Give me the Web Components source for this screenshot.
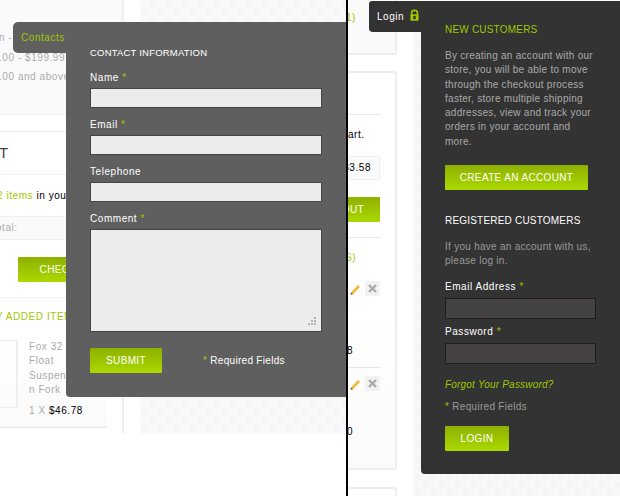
<!DOCTYPE html>
<html>
<head>
<meta charset="utf-8">
<style>
html,body{margin:0;padding:0;background:#fff;}
body{font:10px/14px "Liberation Sans",sans-serif;letter-spacing:.55px;width:620px;height:496px;overflow:hidden;}
</style>
</head>
<body>
<shop-page>
  <left-sheet slot="left"></left-sheet>
  <right-sheet slot="right"></right-sheet>
  <contact-drawer slot="left"></contact-drawer>
  <login-drawer slot="right"></login-drawer>
</shop-page>
<script>
const PATTERN = `background-color:#f6f6f6;background-image:
    linear-gradient(#fafafa 1px,transparent 1px),
    linear-gradient(90deg,#fafafa 1px,transparent 1px),
    conic-gradient(#f5f5f5 25%,#f8f8f8 0 50%,#f5f5f5 0 75%,#f8f8f8 0);
    background-size:8px 8px,8px 8px,16px 16px;`;
const GREEN = 'linear-gradient(#8fb000,#abd900)';

customElements.define('green-button', class extends HTMLElement {
    constructor() {
        super();
        this.attachShadow({ mode: 'open' }).innerHTML = `
        <style>
        :host {
            display:flex;align-items:center;justify-content:center;
            box-sizing:border-box;
            height:25px;
            background:${GREEN};
            border-radius:1px;
            color:#fff;
            letter-spacing:.35px;
            text-transform:uppercase;
        }
        </style>
        <slot></slot>`;
    }
});

customElements.define('form-field', class extends HTMLElement {
    constructor() {
        super();
        this.attachShadow({ mode: 'open' }).innerHTML = `
        <style>
        :host {display:block;}
        label {display:block;height:14px;line-height:var(--label-lh,14px);margin-bottom:4px;color:#fff;}
        i {font-style:normal;color:#9fc800;}
        .box {
            box-sizing:border-box;
            height:var(--h,20px);
            background:var(--fill,#ececec);
            border:1px solid var(--line,#454545);
            position:relative;
        }
        svg {position:absolute;right:5px;bottom:5px;}
        </style>
        <label></label>
        <div class=box></div>`;
    }
    connectedCallback() {
        const label = this.shadowRoot.querySelector('label');
        label.textContent = this.getAttribute('label') + ' ';
        if (this.hasAttribute('req')) label.insertAdjacentHTML('beforeend', '<i>*</i>');
        if (this.hasAttribute('grip'))
            this.shadowRoot.querySelector('.box').innerHTML = `<svg width=9 height=9 fill="#b5b5b5"><rect x=7 y=0 width=2 height=2 /><rect x=4 y=3 width=2 height=2 /><rect x=7 y=3 width=2 height=2 /><rect x=1 y=6 width=2 height=2 /><rect x=4 y=6 width=2 height=2 /><rect x=7 y=6 width=2 height=2 /></svg>`;
    }
});

customElements.define('shop-page', class extends HTMLElement {
    constructor() {
        super();
        this.attachShadow({ mode: 'open' }).innerHTML = `
        <style>
        :host {display:flex;width:620px;height:496px;overflow:hidden;background:#fff;}
        .pane {position:relative;height:496px;overflow:hidden;}
        .l {width:346px;}
        .bar {width:2px;background:#000;}
        .r {width:272px;}
        </style>
        <div class="pane l"><slot name=left></slot></div>
        <div class=bar></div>
        <div class="pane r"><slot name=right></slot></div>`;
    }
});

customElements.define('left-sheet', class extends HTMLElement {
    constructor() {
        super();
        this.attachShadow({ mode: 'open' }).innerHTML = `
        <style>
        :host {display:grid;grid-template-columns:124px 16px 206px;height:434px;color:#aaa;}
        .card {border-right:2px solid #f0f0f0;box-sizing:border-box;overflow:hidden;}
        .tex {${PATTERN}}
        .top {height:115px;box-sizing:border-box;padding-top:31px;background:#fafafa;border-bottom:1px solid #eee;white-space:nowrap;}
        .top div {height:19.5px;line-height:14px;margin-left:-1px;}
        .top b {font-weight:normal;color:#9fc800;}
        .gap {height:16px;border-bottom:1px solid #eee;}
        .head {height:42px;line-height:42px;font-size:15px;color:#444;margin-left:-1px;border-bottom:1px solid #eee;}
        .count {height:41px;line-height:41px;color:#000;white-space:nowrap;margin-left:-3px;}
        .count b {font-weight:normal;color:#9fc800;}
        .tot {height:22px;line-height:22px;background:#fafafa;border:solid #eee;border-width:1px 0;margin-right:15px;white-space:nowrap;text-indent:-4px;}
        .check {width:80px;margin:17px 0 15px 18px;}
        .added {border-top:1px solid #eee;height:42px;line-height:38px;color:#9fc800;white-space:nowrap;text-indent:-4px;}
        .item {display:flex;gap:11px;height:87px;border-bottom:1px solid #e4e4e4;margin-right:15px;background:linear-gradient(#fff,#fafafa);}
        .pic {flex:none;width:16px;height:66px;border:solid #eee;border-width:1px 2px 1px 0;}
        .desc {line-height:14.3px;white-space:nowrap;}
        .price {margin-top:7px;}
        .price em {font-style:normal;color:#000;}
        </style>
        <div class=card>
          <div class=top><div>n - $</div><div>.00 - $199.99 <b>r</b></div><div>.00 and above</div></div>
          <div class=gap></div>
          <div class=head>T</div>
          <div class=count><b>2 items</b> in your</div>
          <div class=tot>otal:</div>
          <green-button class=check>Check</green-button>
          <div class=added>Y ADDED ITEMS</div>
          <div class=item>
            <div class=pic></div>
            <div class=desc>Fox 32<br>Float<br>Suspensio<br>n Fork<div class=price>1 X <em>$46.78</em></div></div>
          </div>
        </div>
        <div></div>
        <div class=tex></div>`;
    }
});

customElements.define('contact-drawer', class extends HTMLElement {
    constructor() {
        super();
        this.attachShadow({ mode: 'open' }).innerHTML = `
        <style>
        :host {
            position:absolute;left:66px;top:22px;
            width:280px;height:375px;
            box-sizing:border-box;
            padding:24px 24px 0;
            background:#5f5f5f;
            border-radius:0 0 0 4px;
            color:#fff;
        }
        .tab {
            position:absolute;left:-53px;top:0;
            width:53px;height:31px;
            box-sizing:border-box;
            padding-left:8px;
            line-height:31px;
            background:#5f5f5f;
            border-radius:5px 0 0 5px;
            color:#9fc800;
        }
        h2 {margin:0 0 10px;font:inherit;font-size:9.5px;height:14px;text-transform:uppercase;letter-spacing:.2px;}
        form-field {width:232px;margin-bottom:9px;--label-lh:16px;}
        .foot {display:flex;align-items:center;margin-top:16px;}
        green-button {width:72px;}
        .req {margin-left:41px;letter-spacing:.3px;}
        .req i {font-style:normal;color:#9fc800;}
        </style>
        <div class=tab>Contacts</div>
        <h2>Contact Information</h2>
        <form-field label=Name req></form-field>
        <form-field label=Email req></form-field>
        <form-field label=Telephone></form-field>
        <form-field label=Comment req grip style="--h:103px"></form-field>
        <div class=foot><green-button>Submit</green-button><span class=req><i>*</i> Required Fields</span></div>`;
    }
});

customElements.define('right-sheet', class extends HTMLElement {
    constructor() {
        super();
        this.attachShadow({ mode: 'open' }).innerHTML = `
        <style>
        :host {display:grid;grid-template-columns:65px 207px;height:496px;color:#000;}
        .col {display:flex;flex-direction:column;gap:16px;width:49px;}
        .card {box-sizing:border-box;width:49px;background:#fafafa;border:solid #eee;border-width:0 2px 2px 0;border-radius:0 0 3px 0;overflow:hidden;position:relative;}
        .one {height:55px;padding-top:11px;color:#9fc800;background:#fafafa;text-indent:-2px;}
        .two {height:399px;border-top-width:2px;border-radius:0 3px 3px 0;padding-right:15px;background:linear-gradient(#fff 60%,#fafafa);}
        .three {height:30px;margin-top:1px;border-top-width:2px;border-bottom:0;border-radius:0 3px 0 0;background:#fff;}
        .hr {height:1px;background:#e8e8e8;margin-right:-1px;}
        .art {margin-top:13px;height:14px;}
        .amt {display:flex;justify-content:flex-end;box-sizing:border-box;margin-top:14px;height:24px;line-height:22px;background:#fafafa;border:solid #eee;border-width:1px 1px 1px 0;padding-right:8px;white-space:nowrap;}
        .out {margin-top:17px;justify-content:flex-end;padding-right:16px;}
        .hr2 {margin-top:15px;}
        .s {color:#9fc800;height:14px;margin-top:13px;text-indent:-3px;}
        .act {display:flex;justify-content:space-between;align-items:center;height:15px;margin-left:2px;}
        .x {width:15px;height:15px;background:#f2f2f2;display:grid;place-items:center;}
        .n {height:14px;text-indent:-1px;}
        .tex {${PATTERN}}
        </style>
        <div class=col>
          <div class="card one">1)</div>
          <div class="card two">
            <div style="height:41px"></div><div class=hr></div>
            <div class=art>art.</div>
            <div class=amt>33.58</div>
            <green-button class=out>OUT</green-button>
            <div class="hr hr2"></div>
            <div class=s>S)</div>
            <div class=act style="margin-top:16px">
              <svg width=11 height=12 viewBox="0 0 11 12"><path d="M1 9.5 8 2l2 2-7 7.2-2.6.6z" fill="#f5b73a"/><path d="M.6 11.6 1 9.5 3 11.2z" fill="#555"/></svg>
              <span class=x><svg width=9 height=9><path d="M1 1l7 7M8 1 1 8" stroke="#aaa" stroke-width="2.4"/></svg></span>
            </div>
            <div class=n style="margin-top:48px">8</div>
            <div class=hr style="margin-top:9px"></div>
            <div class=act style="margin-top:8px">
              <svg width=11 height=12 viewBox="0 0 11 12"><path d="M1 9.5 8 2l2 2-7 7.2-2.6.6z" fill="#f5b73a"/><path d="M.6 11.6 1 9.5 3 11.2z" fill="#555"/></svg>
              <span class=x><svg width=9 height=9><path d="M1 1l7 7M8 1 1 8" stroke="#aaa" stroke-width="2.4"/></svg></span>
            </div>
            <div class=n style="margin-top:34px">0</div>
          </div>
          <div class="card three"></div>
        </div>
        <div class=tex></div>`;
    }
});

customElements.define('login-drawer', class extends HTMLElement {
    constructor() {
        super();
        this.attachShadow({ mode: 'open' }).innerHTML = `
        <style>
        :host {
            position:absolute;left:73px;top:1px;
            width:199px;height:473px;
            box-sizing:border-box;
            padding:22px 24px 0;
            background:#333;
            border-radius:0 0 0 4px;
            color:#aaa;
        }
        .tab {
            position:absolute;left:-52px;top:0;
            display:flex;align-items:center;
            width:52px;height:31px;
            box-sizing:border-box;
            padding:0 2px 0 8px;
            justify-content:space-between;
            background:#333;
            border-radius:3px 0 0 4px;
            color:#fff;
        }
        svg {margin-top:-3px;}
        h2 {margin:0;font:inherit;height:14px;text-transform:uppercase;letter-spacing:.2px;}
        .new {color:#9fc800;}
        p {margin:0;line-height:14.3px;letter-spacing:.27px;}
        .intro {margin-top:12px;}
        .make {width:143px;margin-top:16px;margin-bottom:24px;}
        .reg {color:#fff;}
        .hint {margin-top:12px;margin-bottom:11.4px;color:#999;}
        form-field {width:151px;--h:21px;--fill:#434142;--line:#1e1e1e;margin-bottom:6px;}
        .lost {margin-top:14px;height:14px;font-style:italic;color:#9fc800;letter-spacing:.2px;}
        .req {margin-top:8px;height:14px;color:#999;letter-spacing:.3px;}
        .req i {font-style:normal;color:#9fc800;}
        .go {width:64px;margin-top:12px;}
        </style>
        <div class=tab>Login
          <svg width=9 height=13 viewBox="0 0 11 14"><path d="M2 6V3.6C2 1.8 3.4 .8 5.5 .8S9 1.8 9 3.6V6" fill="none" stroke="#9fc800" stroke-width="2"/><rect x=0.5 y=5.5 width=10 height=8 rx=1 fill="#9fc800"/><rect x=4 y=7.5 width=3 height=4 fill="#333"/></svg>
        </div>
        <h2 class=new>New Customers</h2>
        <p class=intro>By creating an account with our store, you will be able to move through the checkout process faster, store multiple shipping addresses, view and track your orders in your account and more.</p>
        <green-button class=make>Create an Account</green-button>
        <h2 class=reg>Registered Customers</h2>
        <p class=hint>If you have an account with us, please log in.</p>
        <form-field label="Email Address" req></form-field>
        <form-field label="Password" req></form-field>
        <div class=lost>Forgot Your Password?</div>
        <div class=req><i>*</i> Required Fields</div>
        <green-button class=go>Login</green-button>`;
    }
});
</script>
</body>
</html>
